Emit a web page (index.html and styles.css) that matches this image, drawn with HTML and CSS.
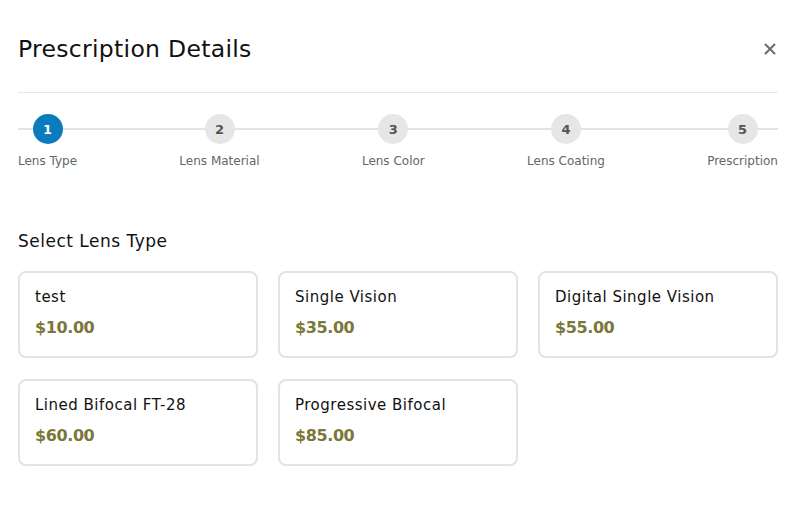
FILE: index.html
```html
<!DOCTYPE html>
<html>
<head>
<meta charset="utf-8">
<link rel="stylesheet" href="styles.css">
</head>
<body>
<div class="modal">
  <div class="header">
    <h1 class="title">Prescription Details</h1>
    <button class="close" aria-label="Close">
      <svg width="12" height="12" viewBox="0 0 12 12"><path d="M1.5 1.5 L10.5 10.5 M10.5 1.5 L1.5 10.5" stroke="#6b6b6b" stroke-width="2" stroke-linecap="round"/></svg>
    </button>
  </div>
  <div class="stepper">
    <div class="step active"><div class="dot">1</div><div class="label">Lens Type</div></div>
    <div class="step"><div class="dot">2</div><div class="label">Lens Material</div></div>
    <div class="step"><div class="dot">3</div><div class="label">Lens Color</div></div>
    <div class="step"><div class="dot">4</div><div class="label">Lens Coating</div></div>
    <div class="step"><div class="dot">5</div><div class="label">Prescription</div></div>
  </div>
  <h2 class="section">Select Lens Type</h2>
  <div class="grid">
    <div class="card"><div class="name">test</div><div class="price">$10.00</div></div>
    <div class="card"><div class="name">Single Vision</div><div class="price">$35.00</div></div>
    <div class="card"><div class="name">Digital Single Vision</div><div class="price">$55.00</div></div>
    <div class="card"><div class="name">Lined Bifocal FT-28</div><div class="price">$60.00</div></div>
    <div class="card"><div class="name">Progressive Bifocal</div><div class="price">$85.00</div></div>
  </div>
</div>
</body>
</html>
```
FILE: styles.css
```css
* { box-sizing: border-box; }
html, body { margin: 0; padding: 0; background: #fff; }
body { font-family: "DejaVu Sans", "Open Sans", sans-serif; color: #1a1a1a; }
.modal { padding: 0 18px; }
.header {
  display: flex; align-items: center; justify-content: space-between;
  height: 93px; border-bottom: 1px solid #e6e6e6; padding-top: 5px;
}
.title { margin: 0; font-size: 23.5px; font-weight: 400; color: #111; letter-spacing: 0.3px; }
.close { border: 0; background: none; padding: 0; margin-right: 2px; display: flex; }
.stepper {
  position: relative; display: flex; justify-content: space-between;
  margin-top: 21px;
}
.stepper::before {
  content: ""; position: absolute; left: 0; right: 0; top: 14px; height: 2px; background: #e3e3e3;
}
.step { position: relative; display: flex; flex-direction: column; align-items: center; }
.dot {
  width: 30px; height: 30px; border-radius: 50%; background: #e6e6e6; color: #555;
  font-weight: 700; font-size: 13px; display: flex; align-items: center; justify-content: center;
}
.step.active .dot { background: #0a7cbd; color: #fff; }
.label { margin-top: 9px; font-size: 12px; color: #666; line-height: 16px; }
.section { margin: 61px 0 0; font-size: 17px; font-weight: 400; color: #111; line-height: 22px; letter-spacing: 0.5px; }
.grid {
  display: grid; grid-template-columns: repeat(3, 1fr); gap: 21px 20px; margin-top: 19px;
}
.card {
  border: 2px solid #e3e3e3; border-radius: 8px; height: 87px; padding: 13px 15px;
}
.name { font-size: 15px; line-height: 22px; color: #111; letter-spacing: 0.5px; }
.price { margin-top: 9px; font-size: 16px; font-weight: 700; color: #7b7639; line-height: 22px; letter-spacing: -0.4px; }
```
